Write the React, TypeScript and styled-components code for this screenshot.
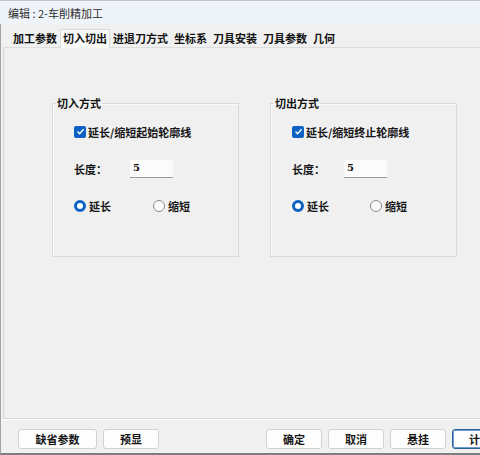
import React from "react";
import styled, { createGlobalStyle } from "styled-components";

const GlobalStyle = createGlobalStyle`
  html, body {
    margin: 0;
    padding: 0;
    background: #f0f0f0;
  }
  body {
    font-family: "Noto Sans CJK SC", "Liberation Sans", sans-serif;
    font-size: 11px;
    color: #141414;
  }
`;

const Window = styled.div`
  width: 480px;
  height: 455px;
  overflow: hidden;
  display: flex;
  flex-direction: column;
  background: #f0f0f0;
`;

const TitleBar = styled.div`
  height: 23px;
  border-top: 1px solid #c2c6ca;
  background: #eef4f9;
  display: flex;
  align-items: center;
  padding-left: 8px;
  font-size: 11px;
  font-weight: 400;
  color: #2e2e2e;
  white-space: pre;
`;

const Main = styled.div`
  flex: 1;
  display: flex;
  flex-direction: column;
  border-left: 1px solid #a3a3a3;
  border-bottom: 2px solid #7e7e7e;
  padding-left: 2px;
  min-height: 0;
`;

const TabStrip = styled.div`
  height: 23px;
  display: flex;
  align-items: flex-end;
  padding-left: 7px;
  position: relative;
  z-index: 1;
`;

const Tab = styled.div<{ $active?: boolean }>`
  height: ${(p) => (p.$active ? "19px" : "17px")};
  line-height: ${(p) => (p.$active ? "17px" : "15px")};
  padding: 0 2px;
  box-sizing: border-box;
  font-weight: 700;
  font-size: 11px;
  color: #111;
  white-space: nowrap;
  background: ${(p) => (p.$active ? "#f9f9f9" : "transparent")};
  border: 1px solid ${(p) => (p.$active ? "#dadada" : "transparent")};
  border-bottom: none;
  margin-bottom: ${(p) => (p.$active ? "-1px" : "0")};
`;

const TabPage = styled.div`
  flex: 1;
  border-top: 1px solid #dcdcdc;
  border-left: 1px solid #d4d4d4;
  border-bottom: 1px solid #d6d6d6;
  padding: 48px 0 0 48px;
  display: flex;
  align-items: flex-start;
  gap: 31px;
`;

const Group = styled.fieldset`
  width: 187px;
  box-sizing: border-box;
  margin: 0;
  padding: 2px 0 32px 21px;
  border: 1px solid #dadada;
  border-radius: 0;
  box-shadow: inset 1px 1px 0 #fbfbfb;
  display: grid;
  grid-auto-rows: 37px;
  align-items: center;
`;

const Legend = styled.legend`
  margin-left: -18px;
  padding: 0 1px;
  line-height: 15px;
  font-weight: 700;
  font-size: 11px;
  color: #111;
`;

const Row = styled.div`
  display: flex;
  align-items: center;
  font-weight: 700;
  font-size: 11px;
  color: #151515;
`;

const CheckBox = styled.span`
  width: 12px;
  height: 12px;
  box-sizing: border-box;
  border-radius: 2px;
  background: #0b62c4;
  display: inline-flex;
  align-items: center;
  justify-content: center;
  margin-right: 2px;
  flex: none;
`;

const FieldLabel = styled.span<{ $width: number }>`
  width: ${(p) => p.$width}px;
  flex: none;
`;

const NumberBox = styled.div`
  width: 43px;
  height: 18px;
  box-sizing: border-box;
  background: #fbfbfb;
  border-bottom: 1px solid #9a9a9a;
  padding: 1px 0 0 3px;
  line-height: 14px;
  font-family: "DejaVu Serif", "Liberation Serif", serif;
  font-weight: 700;
  font-size: 10px;
  color: #111;
`;

const RadioItem = styled.span<{ $width?: number }>`
  display: inline-flex;
  align-items: center;
  gap: 3px;
  width: ${(p) => (p.$width ? `${p.$width}px` : "auto")};
  flex: none;
`;

const RadioDot = styled.span<{ $on?: boolean }>`
  width: 12px;
  height: 12px;
  box-sizing: border-box;
  border-radius: 50%;
  flex: none;
  background: ${(p) => (p.$on ? "#fff" : "#fbfbfb")};
  border: ${(p) => (p.$on ? "3.5px solid #0b62c4" : "1px solid #8c8c8c")};
`;

const Footer = styled.div`
  height: 34px;
  border-top: 1px solid #ffffff;
  display: flex;
  align-items: flex-start;
  padding: 9px 0 0 15px;
  box-sizing: border-box;
`;

const ButtonGroup = styled.div<{ $offset?: number }>`
  display: flex;
  gap: 6px;
  flex: none;
  margin-left: ${(p) => p.$offset ?? 0}px;
`;

const Button = styled.button<{ $width?: number; $default?: boolean }>`
  width: ${(p) => p.$width ?? 56}px;
  height: 20px;
  flex: none;
  box-sizing: border-box;
  padding: 0;
  border-radius: 3px;
  background: #fdfdfd;
  border: 1px solid ${(p) => (p.$default ? "#2d5f99" : "#d2d2d2")};
  box-shadow: ${(p) => (p.$default ? "inset 0 0 0 1px #6b9bd0" : "none")};
  font-family: "Noto Sans CJK SC", "Liberation Sans", sans-serif;
  font-weight: 700;
  font-size: 11px;
  line-height: 18px;
  color: #151515;
`;

const Check = () => (
  <svg width="9" height="9" viewBox="0 0 9 9">
    <path d="M1.5 4.6 L3.6 6.7 L7.6 2.2" fill="none" stroke="#fff" strokeWidth="1.4" />
  </svg>
);

type GroupProps = {
  title: string;
  checkLabel: string;
  labelWidth: number;
  radioWidth: number;
};

const ModeGroup = ({ title, checkLabel, labelWidth, radioWidth }: GroupProps) => (
  <Group>
    <Legend>{title}</Legend>
    <Row>
      <CheckBox>
        <Check />
      </CheckBox>
      {checkLabel}
    </Row>
    <Row>
      <FieldLabel $width={labelWidth}>长度：</FieldLabel>
      <NumberBox>5</NumberBox>
    </Row>
    <Row>
      <RadioItem $width={radioWidth}>
        <RadioDot $on />
        延长
      </RadioItem>
      <RadioItem>
        <RadioDot />
        缩短
      </RadioItem>
    </Row>
  </Group>
);

const tabs = ["加工参数", "切入切出", "进退刀方式", "坐标系", "刀具安装", "刀具参数", "几何"];

export default function App() {
  return (
    <>
      <GlobalStyle />
      <Window>
        <TitleBar>编辑 : 2-车削精加工</TitleBar>
        <Main>
          <TabStrip>
            {tabs.map((t) => (
              <Tab key={t} $active={t === "切入切出"}>
                {t}
              </Tab>
            ))}
          </TabStrip>
          <TabPage>
            <ModeGroup title="切入方式" checkLabel="延长/缩短起始轮廓线" labelWidth={56} radioWidth={79} />
            <ModeGroup title="切出方式" checkLabel="延长/缩短终止轮廓线" labelWidth={52} radioWidth={78} />
          </TabPage>
          <Footer>
            <ButtonGroup>
              <Button $width={79}>缺省参数</Button>
              <Button>预显</Button>
            </ButtonGroup>
            <ButtonGroup $offset={107}>
              <Button>确定</Button>
              <Button>取消</Button>
              <Button>悬挂</Button>
              <Button $default>计算</Button>
            </ButtonGroup>
          </Footer>
        </Main>
      </Window>
    </>
  );
}
